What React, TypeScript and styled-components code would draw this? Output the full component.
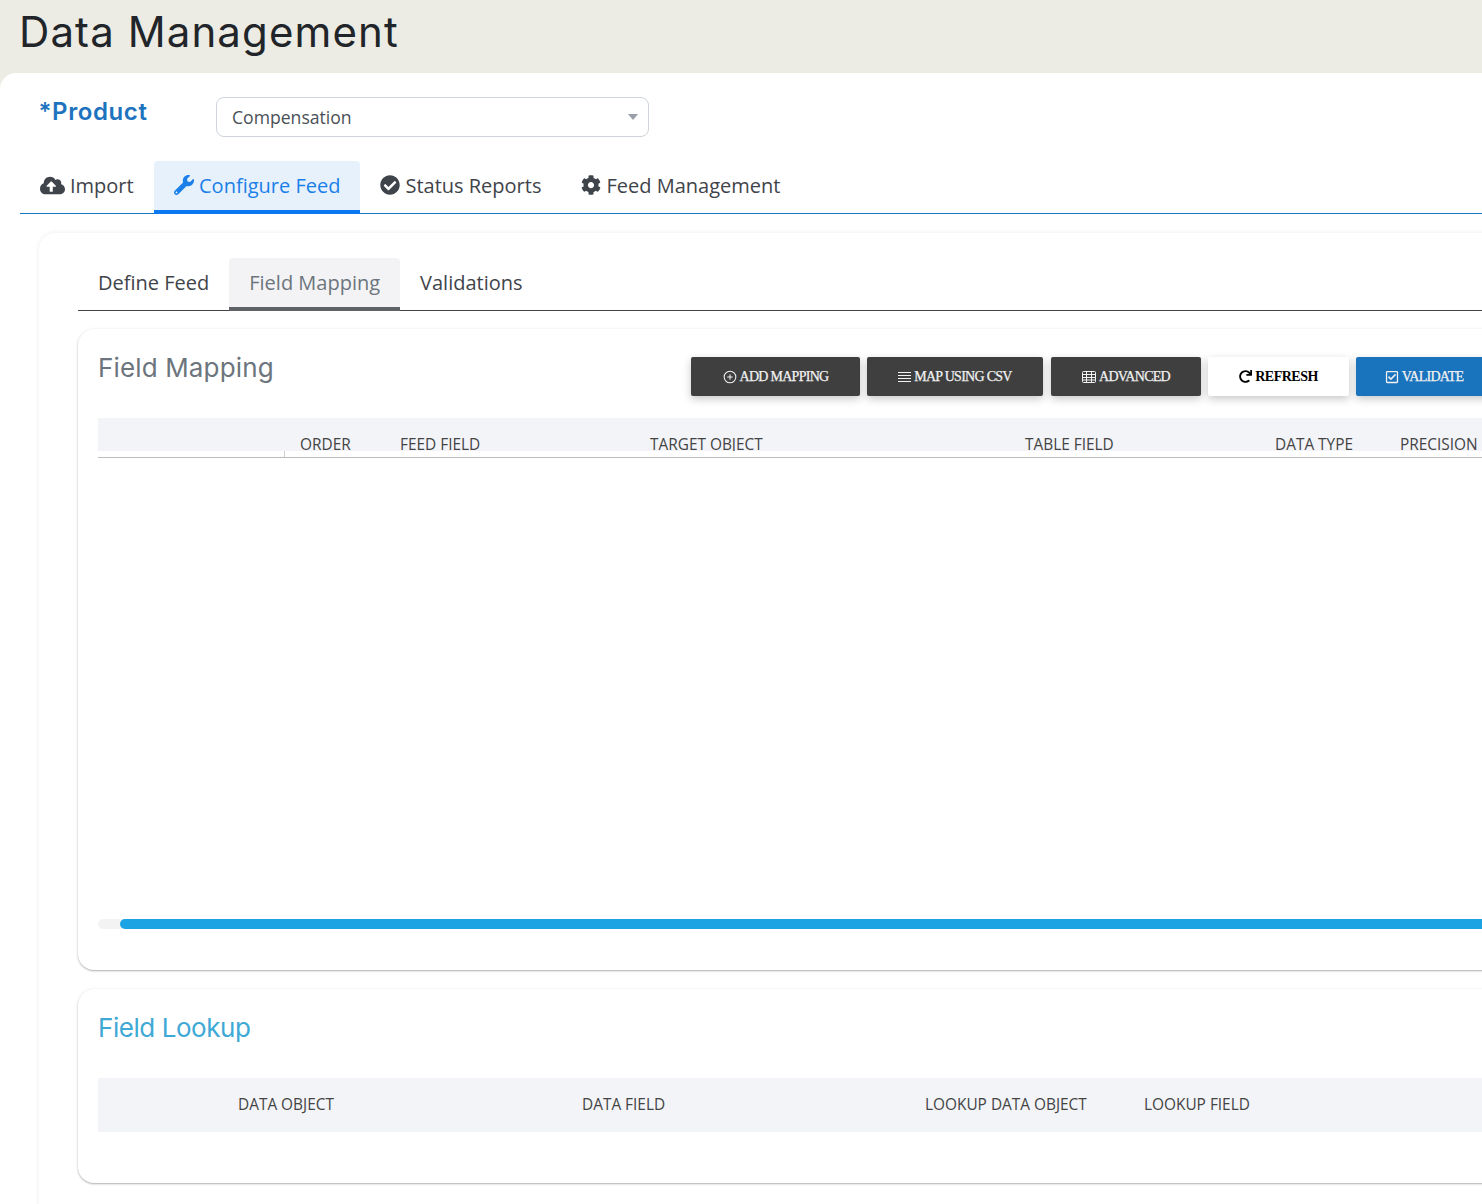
import React from "react";
import styled, { createGlobalStyle } from "styled-components";
import { FaCloudUploadAlt, FaWrench, FaCheckCircle, FaCog, FaRedo, FaRegCheckSquare } from "react-icons/fa";
import { CirclePlus } from "lucide-react";

const Global = createGlobalStyle`
  html, body { margin: 0; padding: 0; overflow: hidden; background: #fff; }
  * { box-sizing: border-box; }
`;
const Page = styled.div`
  width: 1482px; height: 1204px; overflow: hidden; background: #ecece4;
  font-family: "Open Sans", sans-serif; color: #3f444a;
`;
const Header = styled.header`height: 73px; padding-left: 19px;`;
const Title = styled.h1`
  margin: 0; font: 400 42px/63px Inter, sans-serif; letter-spacing: 1.1px; color: #212529;
`;
const Panel = styled.main`
  width: 1700px; height: 1131px; background: #fff; border-top-left-radius: 16px; padding: 24px 0 0 20px;
`;
const ProductRow = styled.div`display: flex; align-items: flex-start; height: 64px;`;
const ProductLabel = styled.label`
  width: 196px; padding-left: 19px; font: 600 24px/30px Inter, sans-serif; color: #1e73be; letter-spacing: 0.6px;
  margin-left: -0.5px;
`;
const SelectBox = styled.div`
  width: 433px; height: 40px; border: 1px solid #ced4da; border-radius: 8px; padding: 0 15.5px;
  display: flex; align-items: center; justify-content: space-between; font-size: 17.6px; color: #495057;
`;
const Caret = styled.span`
  width: 0; height: 0; margin-right: -6px;
  border-left: 5.5px solid transparent; border-right: 5.5px solid transparent; border-top: 6px solid #9a9ea6;
`;
const MainTabs = styled.nav`display: flex; height: 53px; border-bottom: 1px solid #1878bd;`;
const MainTab = styled.div<{ $active?: boolean }>`
  display: flex; align-items: center; gap: 5px; padding: 0 20px 1px; height: 53px; font-size: 20px;
  color: ${p => (p.$active ? "#1a7fe8" : "#3f444a")};
  background: ${p => (p.$active ? "#e6f1fc" : "transparent")};
  border-bottom: 4px solid ${p => (p.$active ? "#0b78ef" : "transparent")};
  border-radius: 4px 4px 0 0;
  white-space: nowrap;
  svg { font-size: 20px; flex: none; }
`;
const ImportTab = styled(MainTab)`
  width: 134px;
  svg { font-size: 25px; }
`;
const OuterCard = styled.section`
  margin: 19px 0 0 19px; height: 1100px; padding: 25px 0 0 39px; background: #fff; border-radius: 16px;
  box-shadow: 0 0 5px rgba(0,0,0,.08);
`;
const SubTabs = styled.nav`display: flex; height: 53px; border-bottom: 1px solid #444;`;
const SubTab = styled.div<{ $active?: boolean }>`
  height: 53px; padding: 0 20px 1px; display: flex; align-items: center; font-size: 20px;
  color: ${p => (p.$active ? "#6c757d" : "#3f444a")};
  background: ${p => (p.$active ? "#f3f3f5" : "transparent")};
  border-bottom: 4px solid ${p => (p.$active ? "#5f6368" : "transparent")};
  border-radius: 4px 4px 0 0;
`;
const Card = styled.section<{ $h: number; $mt: number }>`
  margin-top: ${p => p.$mt}px; height: ${p => p.$h}px; padding: 0 0 0 20px; background: #fff; border-radius: 16px;
  box-shadow: 0 1px 2px rgba(0,0,0,.3), 0 0 4px rgba(0,0,0,.04);
`;
const CardTop = styled.div`display: flex; height: 89px;`;
const CardTitle = styled.h2<{ $accent?: boolean }>`
  margin: 0; width: 593px; padding-top: 21px; font: 400 26px/36px Inter, sans-serif;
  letter-spacing: ${p => (p.$accent ? "-.45px" : ".15px")};
  color: ${p => (p.$accent ? "#3fa9d6" : "#6c757d")};
`;
const Toolbar = styled.div`display: flex; gap: 7px; padding-top: 28px; align-items: flex-start;`;
const Btn = styled.button<{ $kind: "dark" | "light" | "blue"; $w: number }>`
  width: ${p => p.$w}px; height: 39px; border: 0; border-radius: 2px; display: flex; align-items: center; justify-content: center; gap: 3px;
  font: ${p => (p.$kind === "light" ? "700" : "400")} 14px "Liberation Serif", serif;
  letter-spacing: ${p => (p.$kind === "light" ? "-.5px" : "-.72px")}; padding: 0;
  -webkit-text-stroke: ${p => (p.$kind === "light" ? "0" : ".25px")} currentColor;
  background: ${p => (p.$kind === "dark" ? "#3f3f3f" : p.$kind === "blue" ? "#1a73bd" : "#fff")};
  color: ${p => (p.$kind === "light" ? "#000" : "#f2f2f2")};
  box-shadow: 0 3px 8px rgba(0,0,0,.22);
  svg { flex: none; }
`;
const AdvancedBtn = styled(Btn)`margin-left: 1px;`;
const HeadWrap = styled.div`position: relative; height: 40px; border-bottom: 1px solid #bbb;`;
const HeadRow = styled.div`
  display: grid; grid-template-columns: 186px 100px 250px 375px 250px 125px 200px; height: 33px; overflow: hidden; background: #f3f4f8; font-size: 15.4px; color: #444;
`;
const HeadCell = styled.div`padding: 16px 0 0 16px; line-height: 21px; white-space: nowrap;`;
const Tick = styled.i`position: absolute; left: 186px; top: 33px; width: 1px; height: 6px; background: #ccc;`;
const TableBody = styled.div`height: 461px;`;
const ScrollTrack = styled.div`height: 10px; background: #f3f3f3; border-radius: 5px; padding-left: 22px;`;
const ScrollThumb = styled.div`height: 10px; background: #1ba3e4; border-radius: 5px;`;
const LookupTop = styled.div`height: 89px;`;
const LookupHead = styled.div`
  display: grid; grid-template-columns: 124px 344px 343px 219px 200px; height: 54px; padding-bottom: 1px; background: #f3f4f8; font-size: 15.4px; color: #444; align-items: center;
`;
const LookupCell = styled.div`padding-left: 16px; white-space: nowrap;`;

const LinesIcon = () => (
  <svg width="13" height="12" viewBox="0 0 13 12" stroke="currentColor" strokeWidth="1" fill="none">
    <path d="M0 1.5h13M0 4.5h13M0 7.5h13M0 10.5h13" />
  </svg>
);
const GridIcon = () => (
  <svg width="14" height="12" viewBox="0 0 14 12" stroke="currentColor" strokeWidth="1" fill="none">
    <rect x="0.5" y="0.5" width="13" height="11" rx="1" />
    <path d="M0.5 3.5h13M0.5 6.5h13M0.5 9h13M4.5 0.5v11M9.5 0.5v11" />
  </svg>
);

export default function App() {
  return (
    <Page>
      <Global />
      <Header><Title>Data Management</Title></Header>
      <Panel>
        <ProductRow>
          <ProductLabel>*Product</ProductLabel>
          <SelectBox>Compensation<Caret /></SelectBox>
        </ProductRow>
        <MainTabs>
          <ImportTab><FaCloudUploadAlt />Import</ImportTab>
          <MainTab $active><FaWrench />Configure Feed</MainTab>
          <MainTab><FaCheckCircle />Status Reports</MainTab>
          <MainTab><FaCog />Feed Management</MainTab>
        </MainTabs>
        <OuterCard>
          <SubTabs>
            <SubTab>Define Feed</SubTab>
            <SubTab $active>Field Mapping</SubTab>
            <SubTab>Validations</SubTab>
          </SubTabs>
          <Card $h={641} $mt={18}>
            <CardTop>
              <CardTitle>Field Mapping</CardTitle>
              <Toolbar>
                <Btn $kind="dark" $w={169}><CirclePlus size={14} strokeWidth={1.8} />ADD MAPPING</Btn>
                <Btn $kind="dark" $w={176}><LinesIcon />MAP USING CSV</Btn>
                <AdvancedBtn $kind="dark" $w={150}><GridIcon />ADVANCED</AdvancedBtn>
                <Btn $kind="light" $w={141}><FaRedo size={13} />REFRESH</Btn>
                <Btn $kind="blue" $w={136}><FaRegCheckSquare size={14} />VALIDATE</Btn>
              </Toolbar>
            </CardTop>
            <HeadWrap>
              <HeadRow>
                <HeadCell />
                <HeadCell>ORDER</HeadCell>
                <HeadCell>FEED FIELD</HeadCell>
                <HeadCell>TARGET OBJECT</HeadCell>
                <HeadCell>TABLE FIELD</HeadCell>
                <HeadCell>DATA TYPE</HeadCell>
                <HeadCell>PRECISION</HeadCell>
              </HeadRow>
              <Tick />
            </HeadWrap>
            <TableBody />
            <ScrollTrack><ScrollThumb /></ScrollTrack>
          </Card>
          <Card $h={194} $mt={19}>
            <LookupTop>
              <CardTitle $accent>Field Lookup</CardTitle>
            </LookupTop>
            <LookupHead>
              <LookupCell />
              <LookupCell>DATA OBJECT</LookupCell>
              <LookupCell>DATA FIELD</LookupCell>
              <LookupCell>LOOKUP DATA OBJECT</LookupCell>
              <LookupCell>LOOKUP FIELD</LookupCell>
            </LookupHead>
          </Card>
        </OuterCard>
      </Panel>
    </Page>
  );
}
